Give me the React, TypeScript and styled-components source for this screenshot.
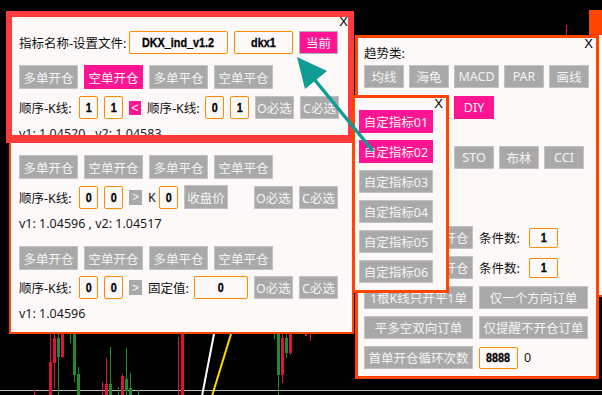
import styled, { createGlobalStyle } from "styled-components";

const GlobalStyle = createGlobalStyle`
  html, body {
    margin: 0;
    padding: 0;
    background: #000;
  }
  body {
    font-family: "Noto Sans", "Noto Sans CJK SC", sans-serif;
  }
`;

const Screen = styled.div`
  position: relative;
  width: 602px;
  height: 395px;
  overflow: hidden;
  background: #000;
`;

const Chart = styled.svg`
  position: absolute;
  left: 0;
  top: 0;
`;

const Stamp = styled.div`
  position: absolute;
  left: 6px;
  top: -10px;
  color: #fff;
  font: 11px "Liberation Sans", sans-serif;
`;

// floating terminal windows
const Win = styled.div<{ $x: number; $y: number; $w: number; $h: number; $b: number; $z: number }>`
  position: absolute;
  left: ${(p) => p.$x}px;
  top: ${(p) => p.$y}px;
  width: ${(p) => p.$w}px;
  height: ${(p) => p.$h}px;
  box-sizing: border-box;
  border: ${(p) => p.$b}px solid #ff4500;
  background: #fdf9f8;
  z-index: ${(p) => p.$z};
  overflow: hidden;
`;

const TitleBar = styled.div`
  height: 23px;
  background: #ff4500;
`;

const Close = styled.div<{ $r?: number }>`
  position: absolute;
  top: 0;
  right: ${(p) => p.$r ?? 4}px;
  font: 13px/12px "Liberation Sans", sans-serif;
  color: #000;
`;

const Highlight = styled.div`
  position: absolute;
  left: 6px;
  top: 11px;
  width: 348px;
  height: 132px;
  box-sizing: border-box;
  border: 6px solid #ff3b3b;
  border-bottom-width: 8px;
  z-index: 3;
`;

const Overlay = styled.svg`
  position: absolute;
  left: 0;
  top: 0;
  z-index: 5;
  pointer-events: none;
`;

const MainBody = styled.div`
  padding: 15px 14px 0 8px;
  display: flex;
  flex-direction: column;
`;

const Block = styled.div<{ $mt: number }>`
  display: flex;
  flex-direction: column;
  margin-top: ${(p) => p.$mt}px;
`;

const Row = styled.div<{ $mt?: number }>`
  display: flex;
  align-items: center;
  gap: 6px;
  margin-top: ${(p) => p.$mt ?? 0}px;
`;

const BtnRow = styled.div<{ $mt?: number; $indent?: number }>`
  display: flex;
  gap: 5px;
  margin-top: ${(p) => p.$mt ?? 0}px;
  padding-left: ${(p) => p.$indent ?? 0}px;
`;

const Label = styled.span<{ $w?: number }>`
  flex: none;
  width: ${(p) => (p.$w ? `${p.$w}px` : "auto")};
  font-size: 12.5px;
  color: #111;
  white-space: nowrap;
`;

const Value = styled.div`
  height: 30px;
  line-height: 30px;
  font-size: 12.5px;
  color: #1a1a1a;
  white-space: nowrap;
`;

const Btn = styled.button<{ $w: number; $h?: number; $pink?: boolean; $edge?: boolean }>`
  flex: none;
  box-sizing: border-box;
  width: ${(p) => p.$w}px;
  height: ${(p) => p.$h ?? 23}px;
  padding: 0;
  display: flex;
  align-items: center;
  justify-content: center;
  background: ${(p) => (p.$pink ? "#ff1493" : "#a9a9a9")};
  border: 1px solid ${(p) => (p.$edge ? "#b4b4b4" : p.$pink ? "#ff1493" : "#c2c2c2")};
  border-radius: 0;
  color: #f4f4f4;
  font-family: inherit;
  font-size: 12.5px;
  white-space: nowrap;
`;

const Cmp = styled.span<{ $pink?: boolean }>`
  flex: none;
  width: ${(p) => (p.$pink ? 12 : 13)}px;
  height: ${(p) => (p.$pink ? 14 : 15)}px;
  display: flex;
  align-items: center;
  justify-content: center;
  background: ${(p) => (p.$pink ? "#ff1493" : "#a9a9a9")};
  color: #f4f4f4;
  font: 12px "Liberation Sans", sans-serif;
`;

const Field = styled.div<{ $w?: number; $h?: number }>`
  flex: none;
  box-sizing: border-box;
  width: ${(p) => p.$w ?? 19}px;
  height: ${(p) => p.$h ?? 23}px;
  display: flex;
  align-items: center;
  justify-content: center;
  border: 1px solid #ff8c00;
  border-radius: 2px;
  color: #000;
`;

// narrow heavy digits, as the terminal draws them
const FieldText = styled.span`
  display: inline-block;
  font: 700 13.5px "Liberation Sans", sans-serif;
  transform: scaleX(0.8);
  -webkit-text-stroke: 0.3px #000;
  white-space: nowrap;
`;

const Push = styled.span`
  margin-left: auto;
`;

const TrendBody = styled.div`
  padding: 6px 0 0 6px;
  display: flex;
  flex-direction: column;
`;

const Heading = styled.div`
  line-height: 20px;
  font-size: 12.5px;
  color: #111;
`;

const ListBody = styled.div`
  padding: 12px 0 0 4px;
  display: flex;
  flex-direction: column;
  gap: 7px;
`;

const orders = ["多单开仓", "空单开仓", "多单平仓", "空单平仓"];

function OrderButtons({ pink }: { pink?: number }) {
  return (
    <Row>
      {orders.map((t, i) => (
        <Btn key={t} $w={59} $h={24} $pink={i === pink}>
          {t}
        </Btn>
      ))}
    </Row>
  );
}

function Num({ v, w, h }: { v: string; w?: number; h?: number }) {
  return (
    <Field $w={w} $h={h}>
      <FieldText>{v}</FieldText>
    </Field>
  );
}

type Candle = [number, number, number, number, number, number, number, string];
// x, width, bodyTop, bodyBottom, wickX, wickTop, wickBottom, colour
const R = "#dc143c";
const G = "#228b22";
const candles: Candle[] = [
  [49, 3, 362, 395, 50, 335, 395, R],
  [53, 3, 338, 363, 54, 334, 388, R],
  [57, 3, 338, 357, 58, 334, 395, G],
  [61, 3, 334, 357, 62, 334, 358, R],
  [70, 1, 334, 343, 70, 334, 343, G],
  [73, 3, 334, 375, 74, 334, 382, G],
  [77, 3, 374, 395, 78, 367, 395, G],
  [34, 1, 390, 395, 34, 390, 395, R],
  [102, 1, 382, 395, 102, 382, 395, R],
  [105, 3, 384, 395, 106, 358, 395, R],
  [109, 3, 384, 395, 110, 347, 395, G],
  [118, 1, 387, 395, 118, 387, 395, G],
  [121, 3, 376, 395, 122, 374, 395, R],
  [125, 3, 379, 391, 126, 348, 395, G],
  [129, 3, 388, 395, 130, 373, 395, G],
  [138, 1, 390, 395, 138, 390, 395, G],
  [178, 1, 337, 395, 178, 337, 395, R],
  [181, 3, 334, 395, 182, 334, 395, R],
  [274, 1, 334, 339, 274, 334, 339, G],
  [277, 3, 334, 375, 278, 334, 395, G],
  [281, 3, 338, 375, 282, 334, 383, R],
  [285, 3, 338, 353, 286, 334, 358, G],
  [289, 3, 334, 353, 290, 334, 355, R],
  [305, 2, 334, 336, 306, 334, 336, R],
  [310, 1, 334, 341, 310, 334, 341, R],
  [566, 1, 25, 35, 566, 25, 35, R],
];

export default function App() {
  return (
    <>
      <GlobalStyle />
      <Screen>
        <Chart width={602} height={395}>
          <rect x={0} y={390} width={602} height={1} fill="#c0c0c0" />
          {candles.map(([x, w, t, b, wx, wt, wb, c], i) => (
            <g key={i} fill={c}>
              <rect x={wx} y={wt} width={1} height={wb - wt} />
              <rect x={x} y={t} width={w} height={b - t} />
            </g>
          ))}
          <line x1={214} y1={334} x2={202} y2={396} stroke="#fff" strokeWidth={2} />
          <line x1={231} y1={334} x2={212} y2={396} stroke="#ffd700" strokeWidth={2} />
        </Chart>
        <Stamp>2021.10.22 04:00</Stamp>

        <Win $x={589} $y={10} $w={60} $h={287} $b={2} $z={1}>
          <TitleBar />
        </Win>

        <Win $x={9} $y={14} $w={345} $h={320} $b={2} $z={1}>
          <Close>X</Close>
          <MainBody>
            <Row>
              <Label $w={104}>指标名称-设置文件:</Label>
              <Num w={99} v="DKX_ind_v1.2" />
              <Num w={59} v="dkx1" />
              <Btn $w={39} $pink $edge>
                当前
              </Btn>
            </Row>
            <Block $mt={11}>
              <OrderButtons pink={1} />
              <Row $mt={7}>
                <Label $w={54}>顺序-K线:</Label>
                <Num v="1" />
                <Num v="1" />
                <Cmp $pink>&lt;</Cmp>
                <Label $w={52}>顺序-K线:</Label>
                <Num v="0" />
                <Num v="1" />
                <Btn $w={39}>O必选</Btn>
                <Btn $w={39}>C必选</Btn>
              </Row>
              <Value>v1: 1.04520 , v2: 1.04583</Value>
            </Block>
            <Block $mt={6}>
              <OrderButtons />
              <Row $mt={6}>
                <Label $w={54}>顺序-K线:</Label>
                <Num v="0" />
                <Num v="0" />
                <Cmp>&gt;</Cmp>
                <Label $w={5}>K</Label>
                <Num v="0" />
                <Btn $w={44} $h={24}>
                  收盘价
                </Btn>
                <Push />
                <Btn $w={39}>O必选</Btn>
                <Btn $w={39}>C必选</Btn>
              </Row>
              <Value>v1: 1.04596 , v2: 1.04517</Value>
            </Block>
            <Block $mt={7}>
              <OrderButtons />
              <Row $mt={6}>
                <Label $w={54}>顺序-K线:</Label>
                <Num v="0" />
                <Num v="0" />
                <Cmp>&gt;</Cmp>
                <Label $w={40}>固定值:</Label>
                <Num w={54} v="0" />
                <Btn $w={39}>O必选</Btn>
                <Btn $w={39}>C必选</Btn>
              </Row>
              <Value>v1: 1.04596</Value>
            </Block>
          </MainBody>
        </Win>

        <Win $x={355} $y={35} $w={244} $h={344} $b={3} $z={2}>
          <Close $r={3}>X</Close>
          <TrendBody>
            <Heading>趋势类:</Heading>
            <BtnRow $mt={1}>
              <Btn $w={40}>均线</Btn>
              <Btn $w={40}>海龟</Btn>
              <Btn $w={45}>MACD</Btn>
              <Btn $w={40}>PAR</Btn>
              <Btn $w={40}>画线</Btn>
            </BtnRow>
            <BtnRow $mt={8} $indent={90}>
              <Btn $w={40} $pink>
                DIY
              </Btn>
            </BtnRow>
            <BtnRow $mt={27} $indent={90}>
              <Btn $w={40}>STO</Btn>
              <Btn $w={40}>布林</Btn>
              <Btn $w={40}>CCI</Btn>
            </BtnRow>
            <Row $mt={57}>
              <Btn $w={109}>指标信号多单开仓</Btn>
              <Label $w={44}>条件数:</Label>
              <Num w={29} h={20} v="1" />
            </Row>
            <Row $mt={7}>
              <Btn $w={109}>指标信号空单开仓</Btn>
              <Label $w={44}>条件数:</Label>
              <Num w={29} h={20} v="1" />
            </Row>
            <Row $mt={7}>
              <Btn $w={109}>1根K线只开平1单</Btn>
              <Btn $w={109}>仅一个方向订单</Btn>
            </Row>
            <Row $mt={7}>
              <Btn $w={109}>平多空双向订单</Btn>
              <Btn $w={109}>仅提醒不开仓订单</Btn>
            </Row>
            <Row $mt={7}>
              <Btn $w={109}>首单开仓循环次数</Btn>
              <Num w={39} h={22} v="8888" />
              <Label>0</Label>
            </Row>
          </TrendBody>
        </Win>

        <Highlight />

        <Win $x={352} $y={95} $w={97} $h={198} $b={3} $z={4}>
          <Close $r={3}>X</Close>
          <ListBody>
            {["01", "02", "03", "04", "05", "06"].map((n, i) => (
              <Btn key={n} $w={74} $pink={i < 2}>
                自定指标{n}
              </Btn>
            ))}
          </ListBody>
        </Win>

        <Overlay width={602} height={395}>
          <line x1={373} y1={151} x2={314} y2={79} stroke="#0f9b96" strokeWidth={3.5} />
          <polygon points="297,57 327,71 305,89" fill="#0f9b96" />
        </Overlay>
      </Screen>
    </>
  );
}
